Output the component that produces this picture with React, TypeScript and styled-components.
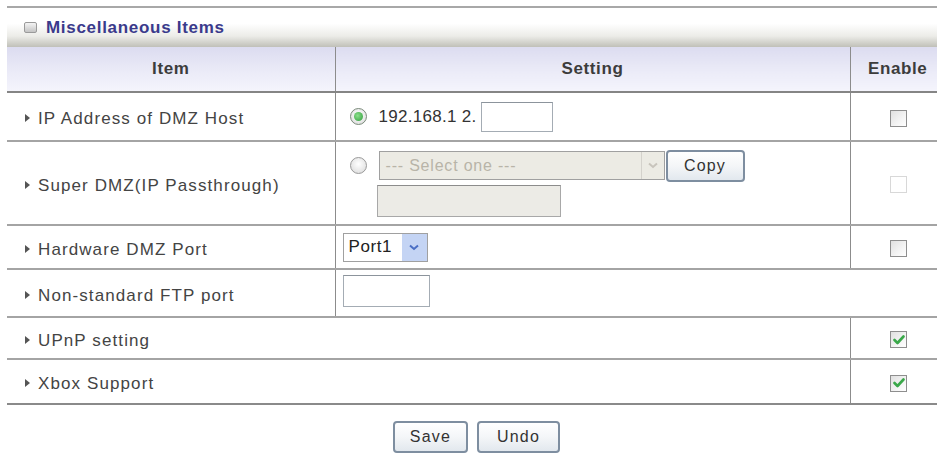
import React from "react";
import styled, { createGlobalStyle } from "styled-components";

const GlobalStyle = createGlobalStyle`
  body {
    margin: 0;
    background: #ffffff;
    font-family: "Liberation Sans", Arial, sans-serif;
  }
`;

const Page = styled.div`
  width: 945px;
  padding: 6px 8px 0 7px;
  box-sizing: border-box;
`;

const TitleBar = styled.div`
  height: 41px;
  border-top: 2px solid #a8a8a8;
  background: linear-gradient(
    180deg,
    #ffffff 0%,
    #ffffff 40%,
    #ecece8 72%,
    #c0c0b8 100%
  );
  display: flex;
  align-items: center;
  gap: 9px;
  padding-left: 17px;
  box-sizing: border-box;
`;

const TitleIcon = styled.span`
  width: 11px;
  height: 9px;
  border: 1px solid #9a9a9a;
  border-radius: 2px;
  background: linear-gradient(180deg, #f4f4f4, #c4c4c4);
`;

const TitleText = styled.span`
  color: #3a3a8c;
  font-weight: bold;
  font-size: 17px;
  letter-spacing: 0.7px;
`;

const Table = styled.table`
  width: 930px;
  border-collapse: collapse;
  table-layout: fixed;
`;

const HeadCell = styled.th<{ $divider?: boolean; $shift?: number }>`
  height: 44px;
  padding: 0 0 0 ${(p) => p.$shift ?? 0}px;
  background: linear-gradient(180deg, #dcdcf0 0%, #ececf8 60%, #f4f4fc 100%);
  border-bottom: 2px solid #858585;
  border-left: ${(p) => (p.$divider ? "1px solid #8c8c8c" : "none")};
  font-size: 17px;
  font-weight: bold;
  color: #3c3c3c;
  letter-spacing: 0.6px;
  text-align: center;
`;

const Row = styled.tr<{ $height: number; $last?: boolean }>`
  height: ${(p) => p.$height}px;
  border-bottom: 2px solid ${(p) => (p.$last ? "#8a8a8a" : "#a4a4a4")};
`;

const ItemCell = styled.td`
  padding: 5px 0 0 18px;
  font-size: 17px;
  color: #444;
  letter-spacing: 1.1px;
  vertical-align: middle;
`;

const Bullet = styled.span`
  display: inline-block;
  width: 0;
  height: 0;
  border-top: 4px solid transparent;
  border-bottom: 4px solid transparent;
  border-left: 5px solid #555;
  margin-right: 8px;
  vertical-align: 2px;
`;

const SettingCell = styled.td`
  border-left: 1px solid #8c8c8c;
  padding: 0 0 0 7px;
  font-size: 17px;
  color: #333;
  vertical-align: middle;
`;

const EnableCell = styled.td`
  border-left: 1px solid #8c8c8c;
  text-align: center;
  vertical-align: middle;
  padding: 2px 0 0 10px;
`;

const Line = styled.div`
  display: flex;
  align-items: center;
`;

const Stack = styled.div`
  display: flex;
  flex-direction: column;
  padding: 3px 0 0 34px;
`;

const Radio = styled.span<{ $on?: boolean }>`
  position: relative;
  width: 15px;
  height: 15px;
  border-radius: 50%;
  border: 1px solid ${(p) => (p.$on ? "#7a8a7a" : "#9a9a9a")};
  background: radial-gradient(circle at 50% 40%, #ffffff, #d8d8d8);
  flex-shrink: 0;
  margin: 0 12px 0 7px;
  &::after {
    content: "";
    display: ${(p) => (p.$on ? "block" : "none")};
    position: absolute;
    left: 3px;
    top: 3px;
    width: 9px;
    height: 9px;
    border-radius: 50%;
    background: radial-gradient(circle at 40% 40%, #8ae08a, #2e9a3a);
  }
`;

const IpText = styled.span`
  letter-spacing: 0.3px;
  margin-right: 4px;
`;

const TextBox = styled.span<{ $w: number; $h: number; $disabled?: boolean }>`
  display: inline-block;
  width: ${(p) => p.$w}px;
  height: ${(p) => p.$h}px;
  box-sizing: border-box;
  border: 1px solid ${(p) => (p.$disabled ? "#a8a8a8" : "#a4acb4")};
  border-top-color: ${(p) => (p.$disabled ? "#8c8c8c" : "#8c949c")};
  background: ${(p) => (p.$disabled ? "#ecebe6" : "#ffffff")};
`;

const SelectBox = styled.span<{ $w: number; $disabled?: boolean }>`
  display: inline-flex;
  align-items: center;
  justify-content: space-between;
  width: ${(p) => p.$w}px;
  height: 29px;
  box-sizing: border-box;
  border: 1px solid #a0a0a0;
  background: ${(p) => (p.$disabled ? "#ecebe4" : "#ffffff")};
  color: ${(p) => (p.$disabled ? "#b8b4a8" : "#222")};
  font-size: ${(p) => (p.$disabled ? 16 : 17)}px;
  padding-left: ${(p) => (p.$disabled ? 6 : 5)}px;
  letter-spacing: ${(p) => (p.$disabled ? 0.8 : 0.6)}px;
`;

const SelectArrow = styled.span<{ $disabled?: boolean }>`
  width: ${(p) => (p.$disabled ? 22 : 25)}px;
  align-self: stretch;
  display: flex;
  align-items: center;
  justify-content: center;
  background: ${(p) => (p.$disabled ? "#ecebe4" : "#c4d4f4")};
  border-left: ${(p) => (p.$disabled ? "1px solid #d4d2cc" : "none")};
`;

const Button = styled.span<{ $w: number; $gap?: number }>`
  display: inline-flex;
  align-items: center;
  justify-content: center;
  width: ${(p) => p.$w}px;
  height: 32px;
  margin-left: ${(p) => p.$gap ?? 0}px;
  box-sizing: border-box;
  border: 2px solid #7e8ea0;
  border-radius: 4px;
  background: linear-gradient(180deg, #ffffff 0%, #f4f6f8 50%, #e2e8ee 100%);
  font-size: 16px;
  color: #333;
  letter-spacing: 1.2px;
`;

const Check = styled.span<{ $disabled?: boolean }>`
  display: inline-flex;
  align-items: center;
  justify-content: center;
  width: 17px;
  height: 17px;
  box-sizing: border-box;
  border: 1px solid ${(p) => (p.$disabled ? "#d8d8d8" : "#8e8e8e")};
  background: ${(p) =>
    p.$disabled
      ? "#ffffff"
      : "linear-gradient(135deg, #e0e0e0 0%, #f4f4f4 60%, #ffffff 100%)"};
  vertical-align: middle;
`;

const ButtonBar = styled.div`
  display: flex;
  justify-content: center;
  gap: 9px;
  padding: 16px 0 0 9px;
`;

const Chevron = ({ color }: { color: string }) => (
  <svg width="10" height="7" viewBox="0 0 10 7">
    <path d="M1 1.5 L5 5 L9 1.5" fill="none" stroke={color} strokeWidth="2" />
  </svg>
);

const Tick = () => (
  <svg width="12" height="10" viewBox="0 0 12 10">
    <path
      d="M1.5 5 L4.5 8 L10.5 1.5"
      fill="none"
      stroke="#3aa84a"
      strokeWidth="2.6"
      strokeLinecap="round"
      strokeLinejoin="round"
    />
  </svg>
);

const Item = ({ label }: { label: string }) => (
  <>
    <Bullet />
    {label}
  </>
);

export default function App() {
  return (
    <Page>
      <GlobalStyle />
      <TitleBar>
        <TitleIcon />
        <TitleText>Miscellaneous Items</TitleText>
      </TitleBar>
      <Table>
        <colgroup>
          <col style={{ width: 328 }} />
          <col style={{ width: 515 }} />
          <col style={{ width: 87 }} />
        </colgroup>
        <thead>
          <tr>
            <HeadCell>Item</HeadCell>
            <HeadCell $divider>Setting</HeadCell>
            <HeadCell $divider $shift={8}>
              Enable
            </HeadCell>
          </tr>
        </thead>
        <tbody>
          <Row $height={49}>
            <ItemCell>
              <Item label="IP Address of DMZ Host" />
            </ItemCell>
            <SettingCell>
              <Line>
                <Radio $on />
                <IpText>192.168.1 2.</IpText>
                <TextBox $w={72} $h={30} />
              </Line>
            </SettingCell>
            <EnableCell>
              <Check />
            </EnableCell>
          </Row>
          <Row $height={84}>
            <ItemCell>
              <Item label="Super DMZ(IP Passthrough)" />
            </ItemCell>
            <SettingCell>
              <Line>
                <Radio />
                <SelectBox $w={286} $disabled>
                  --- Select one ---
                  <SelectArrow $disabled>
                    <Chevron color="#c8c4bc" />
                  </SelectArrow>
                </SelectBox>
                <Button $w={79} $gap={1}>
                  Copy
                </Button>
              </Line>
              <Stack>
                <TextBox $w={184} $h={32} $disabled />
              </Stack>
            </SettingCell>
            <EnableCell>
              <Check $disabled />
            </EnableCell>
          </Row>
          <Row $height={44}>
            <ItemCell>
              <Item label="Hardware DMZ Port" />
            </ItemCell>
            <SettingCell>
              <SelectBox $w={85}>
                Port1
                <SelectArrow>
                  <Chevron color="#4a6ec4" />
                </SelectArrow>
              </SelectBox>
            </SettingCell>
            <EnableCell>
              <Check />
            </EnableCell>
          </Row>
          <Row $height={48}>
            <ItemCell>
              <Item label="Non-standard FTP port" />
            </ItemCell>
            <SettingCell colSpan={2}>
              <TextBox $w={87} $h={32} />
            </SettingCell>
          </Row>
          <Row $height={42}>
            <ItemCell colSpan={2}>
              <Item label="UPnP setting" />
            </ItemCell>
            <EnableCell>
              <Check>
                <Tick />
              </Check>
            </EnableCell>
          </Row>
          <Row $height={45} $last>
            <ItemCell colSpan={2}>
              <Item label="Xbox Support" />
            </ItemCell>
            <EnableCell>
              <Check>
                <Tick />
              </Check>
            </EnableCell>
          </Row>
        </tbody>
      </Table>
      <ButtonBar>
        <Button $w={75}>Save</Button>
        <Button $w={83}>Undo</Button>
      </ButtonBar>
    </Page>
  );
}
